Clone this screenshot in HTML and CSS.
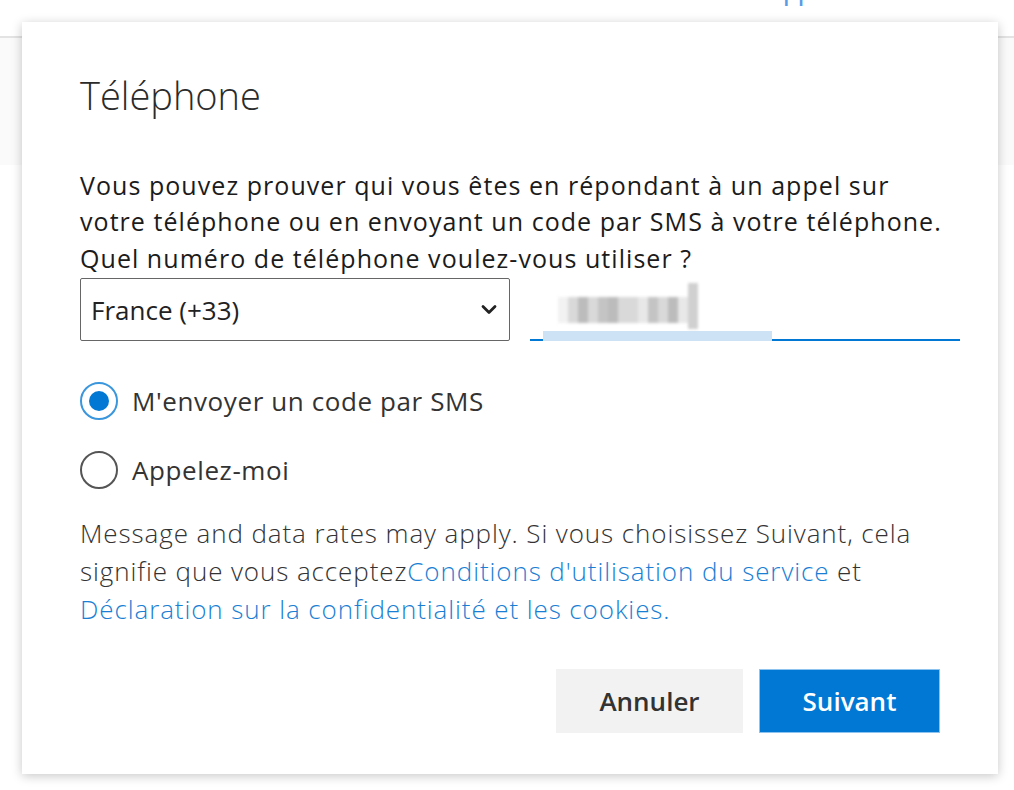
FILE: index.html
```html
<!DOCTYPE html>
<html lang="fr">
<head>
<meta charset="utf-8">
<title>Téléphone</title>
<link rel="stylesheet" href="styles.css">
</head>
<body>
<div class="page">
  <header class="topbar"><span class="toplink">pp</span></header>
  <div class="band"></div>
</div>
<div class="dialog" role="dialog">
  <h1 class="title">Téléphone</h1>
  <p class="intro">Vous pouvez prouver qui vous êtes en répondant à un appel sur<br>votre téléphone ou en envoyant un code par SMS à votre téléphone.<br>Quel numéro de téléphone voulez-vous utiliser ?</p>
  <div class="phone-row">
    <div class="select">
      <span>France (+33)</span>
      <svg class="chev" width="16" height="11" viewBox="0 0 16 11"><path d="M2 2.5 L8 8.5 L14 2.5" fill="none" stroke="#222" stroke-width="2.8" stroke-linecap="round" stroke-linejoin="round"/></svg>
    </div>
    <div class="number">
      <div class="blur"><i></i><i></i><i></i><i></i><i></i><i></i><i></i><i></i><i></i><i></i><i></i><i></i><i></i><i class="tall"></i></div>
      <div class="underline"><span class="hl"></span></div>
    </div>
  </div>
  <div class="options">
    <label class="opt"><span class="radio on"></span><span>M'envoyer un code par SMS</span></label>
    <label class="opt"><span class="radio"></span><span>Appelez-moi</span></label>
  </div>
  <p class="legal">Message and data rates may apply. Si vous choisissez Suivant, cela signifie que vous acceptez<a href="#">Conditions d'utilisation du service</a> et <a href="#">Déclaration sur la confidentialité et les cookies.</a></p>
  <div class="actions">
    <button class="btn secondary">Annuler</button>
    <button class="btn primary">Suivant</button>
  </div>
</div>
</body>
</html>
```
FILE: styles.css
```css
html, body { margin: 0; padding: 0; }
body {
  width: 1014px;
  height: 790px;
  overflow: hidden;
  background: #fff;
  font-family: "Open Sans", "Noto Sans", sans-serif;
  color: #262626;
  position: relative;
}
.topbar {
  height: 36px;
  border-bottom: 2px solid #e3e3e3;
  display: flex;
  justify-content: flex-end;
  padding-right: 202px;
  overflow: hidden;
}
.toplink {
  color: #5a9be6;
  font-size: 30px;
  letter-spacing: -3.6px;
  line-height: 30px;
  margin-top: -27px;
}
.band {
  height: 127px;
  background: #fafafa;
}
.dialog {
  position: absolute;
  left: 22px;
  top: 22px;
  width: 976px;
  height: 752px;
  box-sizing: border-box;
  background: #fff;
  box-shadow: 0 2px 10px rgba(0,0,0,0.22);
  padding: 0 58px;
}
.title {
  margin: 48px 0 0;
  font-size: 38px;
  font-weight: 300;
  line-height: 50px;
  color: #2b2b2b;
}
.intro {
  margin: 46.5px 0 0;
  font-size: 25px;
  letter-spacing: 1.05px;
  line-height: 36.5px;
  color: #1b1b1b;
  white-space: nowrap;
}
.phone-row {
  display: flex;
  gap: 20px;
  margin: 2px -20px 0 0;
}
.select {
  width: 430px;
  height: 63px;
  box-sizing: border-box;
  border: 1.5px solid #666;
  border-radius: 2px;
  display: flex;
  align-items: center;
  justify-content: space-between;
  padding: 0 12px 0 10px;
  font-size: 26px;
  color: #222;
}
.number {
  width: 430px;
  height: 63px;
  display: flex;
  flex-direction: column;
  justify-content: flex-end;
}
.blur {
  display: flex;
  align-items: flex-end;
  height: 46px;
  margin: 0 0 10px 28px;
  filter: blur(1.6px);
}
.blur i {
  display: block;
  width: 10px;
  height: 26px;
  margin-bottom: 6px;
  background: #d9d9d9;
}
.blur i:nth-child(3n) { background: #bcbcbc; }
.blur i:nth-child(4n+1) { background: #e8e8e8; }
.blur i:nth-child(5n) { background: #c4c4c4; }
.blur i:first-child { background: #f2f2f2; }
.blur i.tall { height: 46px; margin-bottom: 0; background: #d0d0d0; }
.underline {
  height: 2px;
  background: #0078d4;
  position: relative;
}
.hl {
  position: absolute;
  left: 13px;
  bottom: 0;
  width: 229px;
  height: 10px;
  background: #cde3f5;
}
.options {
  display: flex;
  flex-direction: column;
  gap: 31px;
  margin-top: 41px;
}
.opt {
  display: flex;
  align-items: center;
  gap: 14px;
  font-size: 26px;
  letter-spacing: 0.6px;
  color: #333;
  height: 38px;
}
.radio {
  width: 38px;
  height: 38px;
  box-sizing: border-box;
  border-radius: 50%;
  border: 2px solid #555;
  display: flex;
  align-items: center;
  justify-content: center;
  flex: none;
}
.radio.on { border-color: #3a96dd; }
.radio.on::after {
  content: "";
  width: 20px;
  height: 20px;
  border-radius: 50%;
  background: #0078d4;
}
.legal {
  margin: 25px 0 0;
  font-size: 26px;
  letter-spacing: 0.9px;
  line-height: 38px;
  color: #333;
  font-weight: 300;
}
.legal a { color: #1a7fd4; text-decoration: none; }
.actions {
  display: flex;
  justify-content: flex-end;
  gap: 16px;
  margin-top: 41px;
}
.btn {
  height: 64px;
  border: 1px solid transparent;
  font-family: "Open Sans", "Noto Sans", sans-serif;
  font-size: 26px;
  font-weight: 600;
  padding: 0;
}
.secondary { width: 187px; background: #f2f2f2; color: #333; }
.primary { width: 181px; background: #0078d4; color: #fff; border-color: #8cc4ef; }
```
